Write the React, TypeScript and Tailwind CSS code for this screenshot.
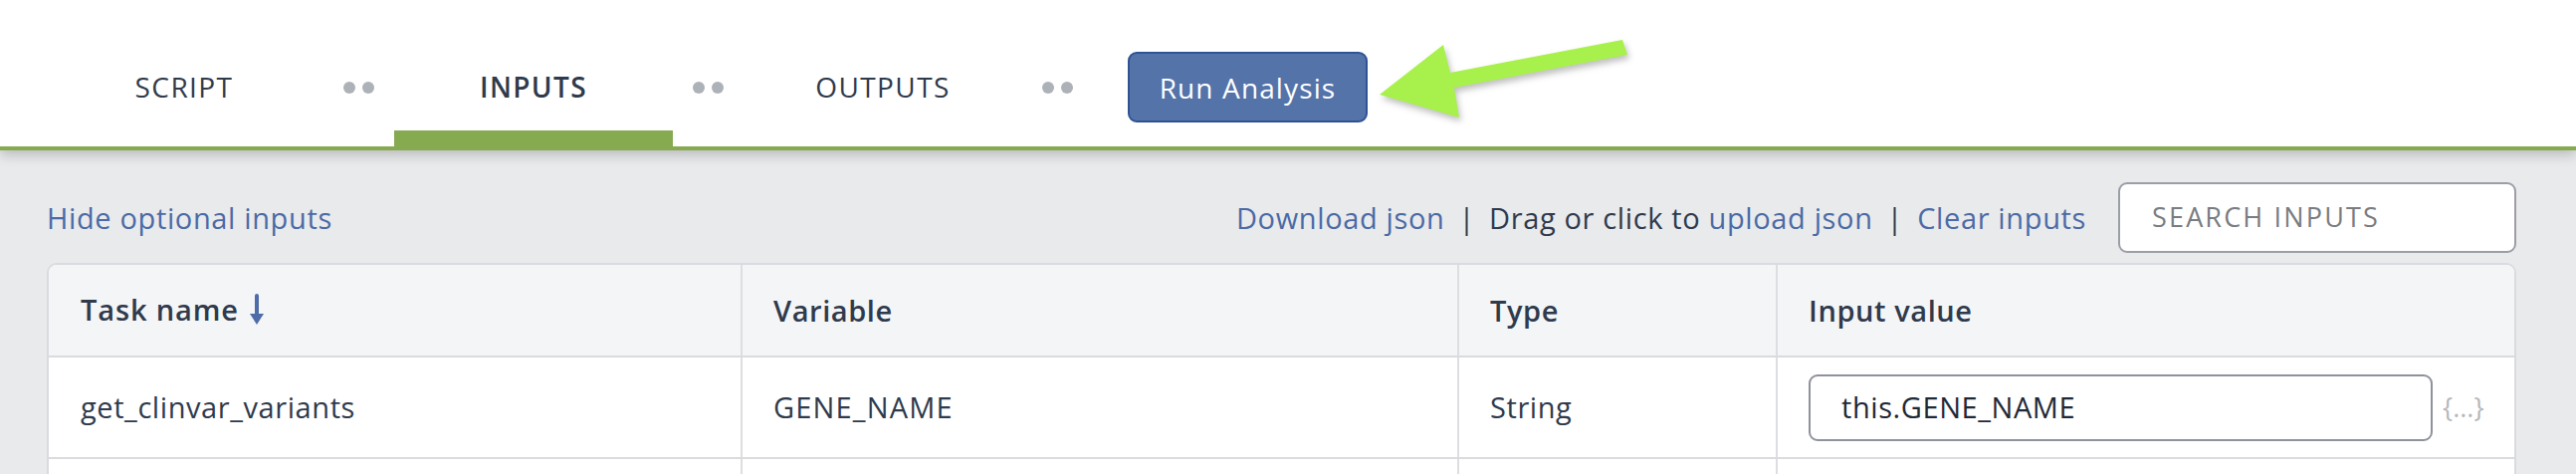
import React from "react";

const FONT = { fontFamily: '"Open Sans", "Noto Sans", sans-serif' };

function Dots() {
  return (
    <div className="flex items-center gap-[7px] mx-[20px]">
      <span className="block w-[12px] h-[12px] rounded-full bg-[#adb1b8]" />
      <span className="block w-[12px] h-[12px] rounded-full bg-[#adb1b8]" />
    </div>
  );
}

function Tab({ label, active }: { label: string; active?: boolean }) {
  return (
    <div
      className={
        "self-stretch w-[280px] flex items-center justify-center pt-[26px] text-[28px] tracking-[0.05em] text-[#2f3a4c] " +
        (active ? "font-semibold shadow-[inset_0_-16px_0_#85aa50]" : "font-normal")
      }
    >
      {label}
    </div>
  );
}

function SortArrow() {
  return (
    <svg width="16" height="32" viewBox="0 0 16 32" className="ml-[10px] shrink-0">
      <line x1="8" y1="2" x2="8" y2="23" stroke="#4d6ca8" strokeWidth="4" strokeLinecap="round" />
      <path d="M1 20 L8 31 L15 20 Z" fill="#4d6ca8" />
    </svg>
  );
}

export default function App() {
  return (
    <div className="w-[2588px] h-[476px] overflow-hidden bg-[#e9eaec] relative" style={FONT}>
      {/* Header */}
      <div className="relative z-10 bg-white h-[151px] border-b-[4px] border-[#85aa50] shadow-[0_4px_12px_rgba(0,0,0,0.22)] flex items-stretch pl-[45px]">
        <Tab label="SCRIPT" />
        <div className="flex items-center pt-[28px]"><Dots /></div>
        <Tab label="INPUTS" active />
        <div className="flex items-center pt-[28px]"><Dots /></div>
        <Tab label="OUTPUTS" />
        <div className="flex items-center pt-[28px]"><Dots /></div>
        <div className="flex items-center pt-[28px] ml-[35px]">
          <button className="w-[241px] h-[71px] rounded-[9px] bg-[#5373a9] border-2 border-[#2f5294] text-white text-[28px] tracking-[0.04em]">
            Run Analysis
          </button>
        </div>
        {/* annotation arrow */}
        <svg
          className="absolute left-[1370px] top-[30px]"
          width="290"
          height="110"
          viewBox="1370 30 290 110"
          style={{ filter: "drop-shadow(2px 4px 3px rgba(0,0,0,0.25))" }}
        >
          <polygon
            points="1386,95 1450,45 1457,73 1630,40 1635,55 1461,88 1466,118"
            fill="#a8f04c"
          />
        </svg>
      </div>

      {/* Body */}
      <div className="pl-[47px] pr-[60px] pt-[32px]">
        {/* Toolbar */}
        <div className="flex items-center justify-between h-[71px] text-[29px] tracking-[0.022em]">
          <a className="text-[#4b6aa6]">Hide optional inputs</a>
          <div className="flex items-center">
            <span className="text-[#4b6aa6]">Download json</span>
            <span className="text-[#2f3a4c] mx-[14px]">|</span>
            <span className="text-[#2f3a4c]">Drag or click to&nbsp;</span>
            <span className="text-[#4b6aa6]">upload json</span>
            <span className="text-[#2f3a4c] mx-[14px]">|</span>
            <span className="text-[#4b6aa6]">Clear inputs</span>
            <div className="ml-[32px] w-[400px] h-[71px] bg-white border-2 border-[#9b9ea6] rounded-[9px] flex items-center pl-[32px] text-[#7a7c80] text-[27px] tracking-[0.08em]">
              SEARCH INPUTS
            </div>
          </div>
        </div>

        {/* Table */}
        <div className="mt-[10px] border-2 border-[#d9dbdf] rounded-t-[10px] overflow-hidden bg-white text-[29px] tracking-[0.02em] text-[#2f3a4c]">
          <div className="grid grid-cols-[695px_720px_320px_1fr] bg-[#f4f5f7] h-[93px] border-b-2 border-[#d9dbdf] font-semibold">
            <div className="flex items-center pl-[32px] pb-[2px] tracking-[0.03em]">
              Task name
              <SortArrow />
            </div>
            <div className="flex items-center pl-[31px] border-l-2 border-[#dcdee2]">Variable</div>
            <div className="flex items-center pl-[31px] border-l-2 border-[#dcdee2]">Type</div>
            <div className="flex items-center pl-[31px] border-l-2 border-[#dcdee2]">Input value</div>
          </div>
          <div className="grid grid-cols-[695px_720px_320px_1fr] h-[102px] border-b-2 border-[#d9dbdf]">
            <div className="flex items-center pl-[32px]">get_clinvar_variants</div>
            <div className="flex items-center pl-[31px] border-l-2 border-[#dcdee2] tracking-[0.04em]">GENE_NAME</div>
            <div className="flex items-center pl-[31px] border-l-2 border-[#dcdee2]">String</div>
            <div className="flex items-center pl-[31px] border-l-2 border-[#dcdee2]">
              <div className="w-[627px] h-[67px] border-2 border-[#8f929b] rounded-[9px] flex items-center pl-[31px] text-[#1f2937]">
                this.GENE_NAME
              </div>
              <span className="ml-[10px] text-[27px] text-[#b5b8bd] tracking-[0]">{"{...}"}</span>
            </div>
          </div>
          <div className="grid grid-cols-[695px_720px_320px_1fr] h-[102px]">
            <div />
            <div className="border-l-2 border-[#dcdee2]" />
            <div className="border-l-2 border-[#dcdee2]" />
            <div className="border-l-2 border-[#dcdee2]" />
          </div>
        </div>
      </div>
    </div>
  );
}
